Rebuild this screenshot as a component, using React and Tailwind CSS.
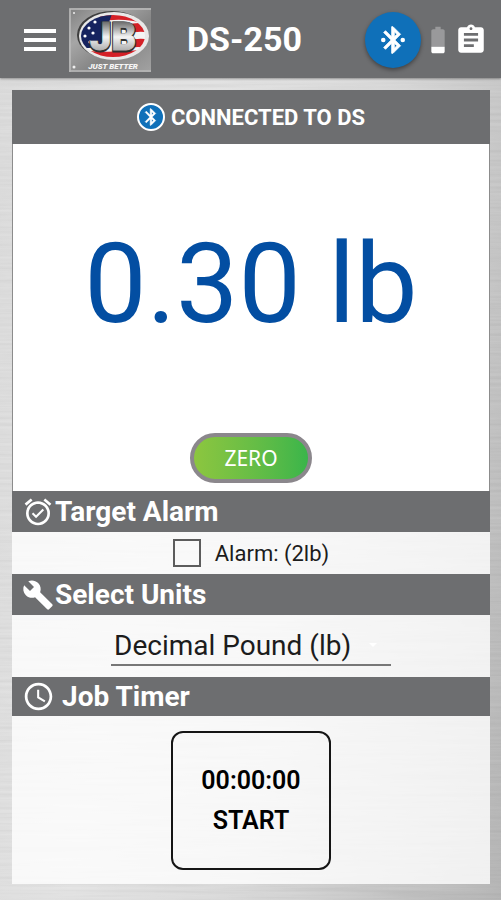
import { MdAssignment, MdAlarmOn, MdBuild, MdAccessTime, MdBattery20 } from "react-icons/md";

function BrushedMetal() {
  return (
    <div aria-hidden="true" className="absolute inset-0 -z-10 bg-[linear-gradient(100deg,#dedede_0%,#e6e6e6_35%,#dcdcdc_60%,#b4b4b4_100%)]">
      <svg className="h-full w-full opacity-25">
        <filter id="grain">
          <feTurbulence type="fractalNoise" baseFrequency="0.008 0.3" numOctaves="3" seed="4" />
          <feColorMatrix type="saturate" values="0" />
          <feComponentTransfer>
            <feFuncA type="linear" slope="0" intercept="0.5" />
          </feComponentTransfer>
        </filter>
        <rect width="100%" height="100%" filter="url(#grain)" />
      </svg>
    </div>
  );
}

function BluetoothIcon({ connected = false, className }) {
  return (
    <svg viewBox="0 0 24 24" className={className} fill="currentColor" aria-hidden="true">
      <path
        d="M17.71 7.71 12 2h-1v7.59L6.41 5 5 6.41 10.59 12 5 17.59 6.41 19 11 14.41V22h1l5.71-5.71-4.3-4.29 4.3-4.29zM13 5.83l1.88 1.88L13 9.59V5.83zm1.88 10.46L13 18.17v-3.76l1.88 1.88z"
        stroke="currentColor"
        strokeWidth="0.6"
        strokeLinejoin="round"
      />
      {connected && (
        <>
          <circle cx="4.7" cy="12" r="1.7" />
          <circle cx="19.3" cy="12" r="1.7" />
        </>
      )}
    </svg>
  );
}

function Logo() {
  return (
    <svg viewBox="0 0 82 64" className="h-16 w-[82px] shrink-0" role="img" aria-label="JB Just Better">
      <defs>
        <linearGradient id="plate" x1="0" y1="0" x2="1" y2="1">
          <stop offset="0" stopColor="#808080" />
          <stop offset="0.3" stopColor="#a6a6a6" />
          <stop offset="0.6" stopColor="#858585" />
          <stop offset="1" stopColor="#a2a2a2" />
        </linearGradient>
        <linearGradient id="chrome" x1="0" y1="0" x2="0" y2="1">
          <stop offset="0.15" stopColor="#6a6a6a" />
          <stop offset="0.5" stopColor="#f4f4f4" />
          <stop offset="0.85" stopColor="#a4a4a4" />
        </linearGradient>
        <clipPath id="flag">
          <ellipse cx="44" cy="28" rx="32" ry="21" />
        </clipPath>
      </defs>
      <rect width="82" height="64" fill="url(#plate)" />
      <path d="M1 64V1H82" fill="none" stroke="#bcbcbc" strokeWidth="1.5" />
      <path d="M0 63H82" stroke="#b8b8b8" strokeWidth="1.5" />
      <ellipse cx="43" cy="27" rx="35" ry="24" fill="#3e3e3e" />
      <ellipse cx="45" cy="28" rx="35" ry="24" fill="#e8e8e8" />
      <g clipPath="url(#flag)">
        <rect x="8" y="4" width="74" height="48" fill="#f4f4f4" />
        <path d="M30 8Q54 2 82 12V18Q56 8 30 14ZM58 17Q70 13 82 17V25Q70 22 58 26ZM58 33Q70 29 82 32V41Q68 37 58 41ZM18 43Q42 45 72 42V51H18Z" fill="#d42027" />
        <path d="M8 4H44Q38 16 36 38L20 40L8 40Z" fill="#16235f" />
        <g fill="#fff">
          <circle cx="20" cy="20" r="1.6" />
          <circle cx="26" cy="14" r="1.6" />
          <circle cx="16" cy="28" r="1.6" />
          <circle cx="24" cy="25" r="1.6" />
          <circle cx="21" cy="34" r="1.6" />
        </g>
      </g>
      <text x="44" y="43" textAnchor="middle" fontFamily="Roboto, sans-serif" fontWeight="900" fontSize="38" fill="#303030" stroke="#303030" strokeWidth="3">JB</text>
      <text x="44" y="42" textAnchor="middle" fontFamily="Roboto, sans-serif" fontWeight="900" fontSize="38" fill="url(#chrome)" stroke="url(#chrome)" strokeWidth="1">JB</text>
      <text x="44" y="61" textAnchor="middle" fontFamily="Roboto, sans-serif" fontWeight="900" fontStyle="italic" fontSize="8" fill="#f6f6f6">JUST BETTER</text>
      <g fill="#eee">
        <circle cx="5" cy="5" r="1" />
        <circle cx="5" cy="59" r="1.5" />
      </g>
    </svg>
  );
}

function SectionBar({ icon, children, className = "" }) {
  return (
    <h2 className={`flex items-center bg-[#6d6e70] pl-2.5 text-[28px] leading-10 font-bold text-white ${className}`}>
      {icon}
      {children}
    </h2>
  );
}

export default function App() {
  return (
    <div className="relative isolate flex min-h-screen flex-col font-[Roboto,sans-serif] text-[#1c1c1c]">
      <BrushedMetal />
      <header className="flex h-[78px] items-center bg-[#6d6e70] pt-px pr-[13px] pl-6 text-white shadow-[0_1px_2px_#0005]">
        <button aria-label="Menu" className="flex w-[45px] shrink-0">
          <svg viewBox="0 0 32 22" className="h-[22px] w-8" fill="currentColor">
            <path d="M0 0H32V4H0ZM0 9H32V13H0ZM0 18H32V22H0Z" />
          </svg>
        </button>
        <Logo />
        <h1 className="ml-9 flex-1 text-[34px] font-bold">DS-250</h1>
        <button aria-label="Bluetooth" className="flex size-14 items-center justify-center rounded-full bg-[#0f70b9] shadow-[0_2px_4px_#0006]">
          <BluetoothIcon connected className="size-8" />
        </button>
        <MdBattery20 size={32} className="ml-px" />
        <button aria-label="Job log">
          <MdAssignment size={34} />
        </button>
      </header>
      <main className="mt-3 mr-[11px] mb-4 ml-3 flex flex-1 flex-col bg-[#fffc]">
        <div className="flex h-[54px] items-center justify-center gap-1.5 bg-[#6d6e70] text-[22px] font-bold text-white">
          <span className="flex size-7 items-center justify-center rounded-full border-2 border-white bg-[#0f70b9]">
            <BluetoothIcon className="size-5" />
          </span>
          CONNECTED TO DS
        </div>
        <section className="flex h-[347px] flex-col items-center border-x border-[#8c8c8c] bg-white">
          <output className="mt-[74px] text-[111px] leading-[132px] text-[#034ea2]">0.30 lb</output>
          <button className="mt-auto mb-2 h-[50px] w-[122px] rounded-full border-4 border-[#8b878c] bg-linear-to-r from-[#8cc63f] to-[#39b54a] pt-0.5 font-['Noto_Sans',sans-serif] text-[21px] text-white">
            ZERO
          </button>
        </section>
        <SectionBar className="h-[41px]" icon={<MdAlarmOn size={32} className="mr-px" />}>Target Alarm</SectionBar>
        <label className="flex h-[42px] items-center justify-center gap-3.5 text-[22px]">
          <input type="checkbox" className="size-7 appearance-none border-2 border-[#5c5c5c]" />
          Alarm: (2lb)
        </label>
        <SectionBar className="h-[41px]" icon={<MdBuild size={32} className="mr-px" />}>Select Units</SectionBar>
        <div className="flex h-[62px] items-start justify-center pt-2">
          <div className="relative w-[280px]">
            <select aria-label="Units" className="h-[43px] w-full appearance-none border-b-2 border-[#777] pt-0.5 pl-[3px] text-[28px]">
              <option>Decimal Pound (lb)</option>
            </select>
            <svg viewBox="0 0 8 4" className="pointer-events-none absolute top-5 right-3.5 h-1 w-2" fill="#fff">
              <path d="M0 0H8L4 4Z" />
            </svg>
          </div>
        </div>
        <SectionBar className="h-[39px]" icon={<MdAccessTime size={33} className="mr-[7px]" />}>Job Timer</SectionBar>
        <div className="flex flex-1 items-start justify-center pt-[15px]">
          <button className="flex h-[139px] w-40 flex-col items-center justify-center rounded-xl border-2 border-[#151515] text-[25px] leading-10 font-semibold text-black">
            <time>00:00:00</time>
            <span>START</span>
          </button>
        </div>
      </main>
    </div>
  );
}
